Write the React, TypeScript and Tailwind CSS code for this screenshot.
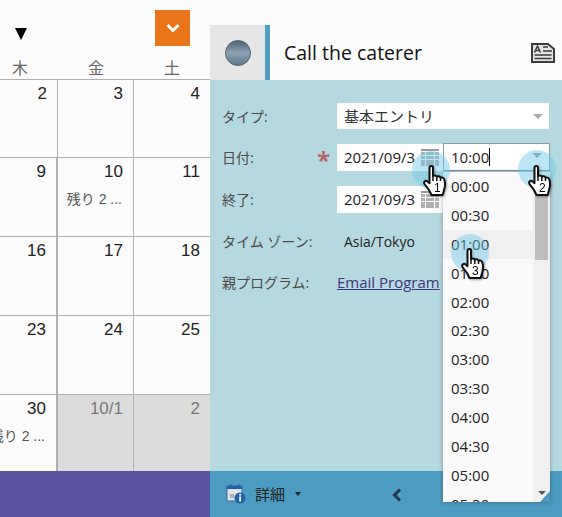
const SANS = "font-['Open_Sans','Noto_Sans_CJK_JP',sans-serif]";

const ROWS = [
  { h: "h-[78px]", cells: [{ n: "2" }, { n: "3" }, { n: "4" }] },
  { h: "h-[79px]", cells: [{ n: "9" }, { n: "10", note: "残り 2 ..." }, { n: "11" }] },
  { h: "h-[79px]", cells: [{ n: "16" }, { n: "17" }, { n: "18" }] },
  { h: "h-[79px]", cells: [{ n: "23" }, { n: "24" }, { n: "25" }] },
  { h: "h-[77px]", cells: [{ n: "30", note: "残り 2 ..." }, { n: "10/1", off: true }, { n: "2", off: true }] },
];

const TIMES = ["00:00", "00:30", "01:00", "01:30", "02:00", "02:30", "03:00", "03:30", "04:00", "04:30", "05:00", "05:30"];

function CalendarIcon({ className }: { className: string }) {
  return (
    <svg viewBox="0 0 18 17" className={className} fill="#b0b0b0">
      <rect x="0" y="0" width="18" height="2" fill="#9a9a9a" />
      {[3, 7, 11, 14].map((y) =>
        [0, 5, 9, 14].map((x) => <rect key={`${x}-${y}`} x={x} y={y} width="4" height="3" />)
      )}
    </svg>
  );
}

function Hand({ label, className }: { label: string; className: string }) {
  return (
    <div className={`absolute w-[26px] h-[32px] drop-shadow-[1px_1px_1px_rgba(0,0,0,0.35)] ${className}`}>
      <svg viewBox="0 0 26 32" className="w-full h-full">
        <path
          d="M6.500 2.500c0-2 3.500-2 3.500 0V11c1.200-1 3.200-.8 3.800.8 1.200-1 3.200-.6 3.700 1 1.200-.8 3.300-.3 3.700 1.500 1 3 1 7 0 10l-1.500 5.700H8.500L6 25 1.500 19c-1.200-1.800.8-4 2.700-2.800l2.300 2V2.500z"
          fill="#fff"
          stroke="#111"
          strokeWidth="2"
          strokeLinejoin="round"
        />
        <path d="M10 11v5M13.800 12v4M17.500 13v3" fill="none" stroke="#111" strokeWidth="1.500" />
      </svg>
      <span className="absolute left-[11px] top-[16px] text-[12px] leading-[14px] text-black font-['Liberation_Sans',sans-serif]">
        {label}
      </span>
    </div>
  );
}

function FormRow({ label, className, children }: { label: string; className: string; children?: React.ReactNode }) {
  return (
    <div className={`flex items-center ${className}`}>
      <span className="w-[115px] text-[14px] text-[#4a4a4a] shrink-0 whitespace-nowrap">{label}</span>
      {children}
    </div>
  );
}

function DateField() {
  return (
    <div className="w-[106px] h-[27px] bg-white flex items-center pl-[7px] text-[15px] text-[#222] whitespace-nowrap">
      <span className="w-[71px] overflow-hidden">2021/09/30</span>
      <CalendarIcon className="ml-[6px] w-[18px] h-[17px]" />
    </div>
  );
}

export default function App() {
  return (
    <div className={`relative flex w-[562px] h-[517px] overflow-hidden bg-[#fcfcfc] ${SANS}`}>
      <div className="w-[210px] shrink-0 flex flex-col font-['Liberation_Sans','Noto_Sans_CJK_JP',sans-serif]">
        <div className="h-[58px] relative">
          <div className="absolute left-[15px] top-[28px] w-0 h-0 border-l-[6px] border-r-[6px] border-t-[12px] border-l-transparent border-r-transparent border-t-black" />
          <div className="absolute left-[155px] top-[10px] w-[35px] h-[36px] bg-[#e8751a] flex items-center justify-center">
            <svg viewBox="0 0 14 10" className="w-[14px] h-[10px]">
              <path d="M1.500 2 7 7.500 12.500 2" fill="none" stroke="#fff" strokeWidth="3" />
            </svg>
          </div>
        </div>
        <div className="h-[21px] grid grid-cols-[58px_76px_76px] text-[16px] leading-[21px] text-[#666]">
          <span className="pl-[12px]">木</span>
          <span className="pl-[30px]">金</span>
          <span className="pl-[30px]">土</span>
        </div>
        {ROWS.map((row, i) => (
          <div key={i} className={`${row.h} grid grid-cols-[58px_76px_76px] border-t border-[#b0b0b0]`}>
            {row.cells.map((c, j) => (
              <div
                key={j}
                className={`text-right pr-[10px] pt-[3px] text-[17px] leading-[22px] overflow-hidden whitespace-nowrap ${
                  j < 2 ? "border-r border-[#b0b0b0]" : ""
                } ${j === 0 && i > 0 ? "border-r-2" : ""} ${c.off ? "bg-[#dcdcdc] text-[#777]" : "text-[#222]"}`}
              >
                {c.n}
                {c.note && (
                  <div className="flex justify-end text-[14px] leading-[18px] pt-[7px] pr-[1px] text-[#555]">
                    <span className="shrink-0">{c.note}</span>
                  </div>
                )}
              </div>
            ))}
          </div>
        ))}
        <div className="flex-1 bg-[#5a52a1]" />
      </div>

      <div className="flex-1 flex flex-col pt-[25px]">
        <div className="h-[55px] flex items-center shrink-0">
          <div className="w-[55px] h-full bg-[#e6e6e6] flex items-center justify-center">
            <div className="w-[26px] h-[26px] rounded-full border border-[#4d5d68] bg-gradient-to-b from-[#4d6578] via-[#8ea3b3] to-[#5d7a90]" />
          </div>
          <div className="w-[5px] h-full bg-[#4f9fc4]" />
          <span className="ml-[14px] text-[19.500px] text-[#111]">Call the caterer</span>
          <svg viewBox="0 0 24 20" className="w-[24px] h-[20px] ml-auto mr-[7px]">
            <path d="M1 1h16l6 5v13H1z" fill="#e4e4e4" stroke="#3d3d3d" strokeWidth="2" />
            <path d="M3.500 9.500 6.500 3 9.500 9.500M4.500 7.500h4M12 4h5M12 8h9M3.500 12h17M3.500 15.500h17" fill="none" stroke="#3d3d3d" strokeWidth="1.500" />
          </svg>
        </div>

        <div className="flex-1 bg-[#b5d9e1] pl-[12px] pt-[23px]">
          <FormRow label="タイプ:" className="h-[26px]">
            <div className="w-[212px] h-[26px] bg-white flex items-center pl-[7px] text-[15px] text-[#333] relative">
              基本エントリ
              <div className="absolute right-[6px] top-[11px] w-0 h-0 border-l-[5px] border-r-[5px] border-t-[5px] border-l-transparent border-r-transparent border-t-[#aaa]" />
            </div>
          </FormRow>
          <FormRow label="日付:" className="h-[27px] mt-[15px]">
            <DateField />
          </FormRow>
          <FormRow label="終了:" className="h-[27px] mt-[15px]">
            <DateField />
          </FormRow>
          <FormRow label="タイム ゾーン:" className="h-[20px] mt-[18px]">
            <span className="text-[14px] text-[#222] pl-[7px]">Asia/Tokyo</span>
          </FormRow>
          <FormRow label="親プログラム:" className="h-[20px] mt-[21px]">
            <span className="text-[15px] text-[#40357f] underline whitespace-nowrap">Email Program</span>
          </FormRow>
        </div>

        <div className="h-[46px] bg-[#4c9bc0] shrink-0 flex items-center pl-[16px] relative">
          <svg viewBox="0 0 20 20" className="w-[20px] h-[20px]">
            <rect x="1" y="2" width="15" height="15" fill="#dfe3e6" stroke="#3f6d9e" />
            <rect x="1" y="2" width="15" height="3" fill="#1f5fae" />
            <path d="M4.500 0v4M12.500 0v4" stroke="#1f5fae" strokeWidth="1.500" />
            <rect x="4" y="10" width="4" height="4" fill="#aab2b8" />
            <circle cx="14" cy="14" r="5.500" fill="#1f5fae" />
            <rect x="13.200" y="12.500" width="1.800" height="5" fill="#fff" />
            <rect x="13.200" y="10" width="1.800" height="1.600" fill="#fff" />
          </svg>
          <span className="ml-[9px] text-[15px] text-[#222]">詳細</span>
          <div className="ml-[10px] w-0 h-0 border-l-[3px] border-r-[3px] border-t-[4px] border-l-transparent border-r-transparent border-t-[#222]" />
          <svg viewBox="0 0 10 14" className="absolute left-[182px] top-[17px] w-[10px] h-[14px]">
            <path d="M8 1.500 2.500 7 8 12.500" fill="none" stroke="#26364a" strokeWidth="3" />
          </svg>
        </div>
      </div>

      <div className="absolute left-[317px] top-[148px] text-[24px] leading-[24px] text-[#b5666a] font-bold">*</div>

      <div className="absolute left-[443px] top-[143px] w-[107px] h-[28px] bg-white border border-[#8a9a9f] flex items-center pl-[7px] text-[15px] text-[#222]">
        10:00
        <span className="w-px h-[18px] bg-black" />
        <div className="absolute right-[7px] top-[9px] w-0 h-0 border-l-[5px] border-r-[5px] border-t-[5px] border-l-transparent border-r-transparent border-t-[#999]" />
      </div>
      <div className="absolute left-[443px] top-[172px] w-[107px] h-[330px] bg-[#fafafa] shadow-[0_0_4px_rgba(0,0,0,0.35)] overflow-hidden text-[15px] text-[#222]">
        {TIMES.map((t) => (
          <div key={t} className={`h-[28.900px] leading-[28.900px] pl-[8px] ${t === "01:00" ? "bg-[#f0f0f0]" : ""}`}>
            {t}
          </div>
        ))}
        <div className="absolute right-0 top-0 w-[17px] h-full bg-[#f0f0f0]">
          <div className="ml-[2px] mt-[14px] w-[13px] h-[74px] bg-[#bdbdbd]" />
          <div className="absolute left-[5px] bottom-[7px] w-0 h-0 border-l-[4px] border-r-[4px] border-t-[4px] border-l-transparent border-r-transparent border-t-[#555]" />
        </div>
      </div>
      <div className="absolute left-[540px] top-[491px] w-[10px] h-[11px] bg-[#4c9bc0] [clip-path:polygon(100%_0,100%_100%,0_100%)]" />

      <div className="absolute left-[412px] top-[151px] w-[38px] h-[38px] rounded-full bg-[#6cc7ec]/45" />
      <div className="absolute left-[518px] top-[150px] w-[38px] h-[38px] rounded-full bg-[#6cc7ec]/45" />
      <div className="absolute left-[451px] top-[234px] w-[38px] h-[38px] rounded-full bg-[#6cc7ec]/45" />
      <Hand label="1" className="left-[423px] top-[165px]" />
      <Hand label="2" className="left-[528px] top-[165px]" />
      <Hand label="3" className="left-[461px] top-[248px]" />
    </div>
  );
}
